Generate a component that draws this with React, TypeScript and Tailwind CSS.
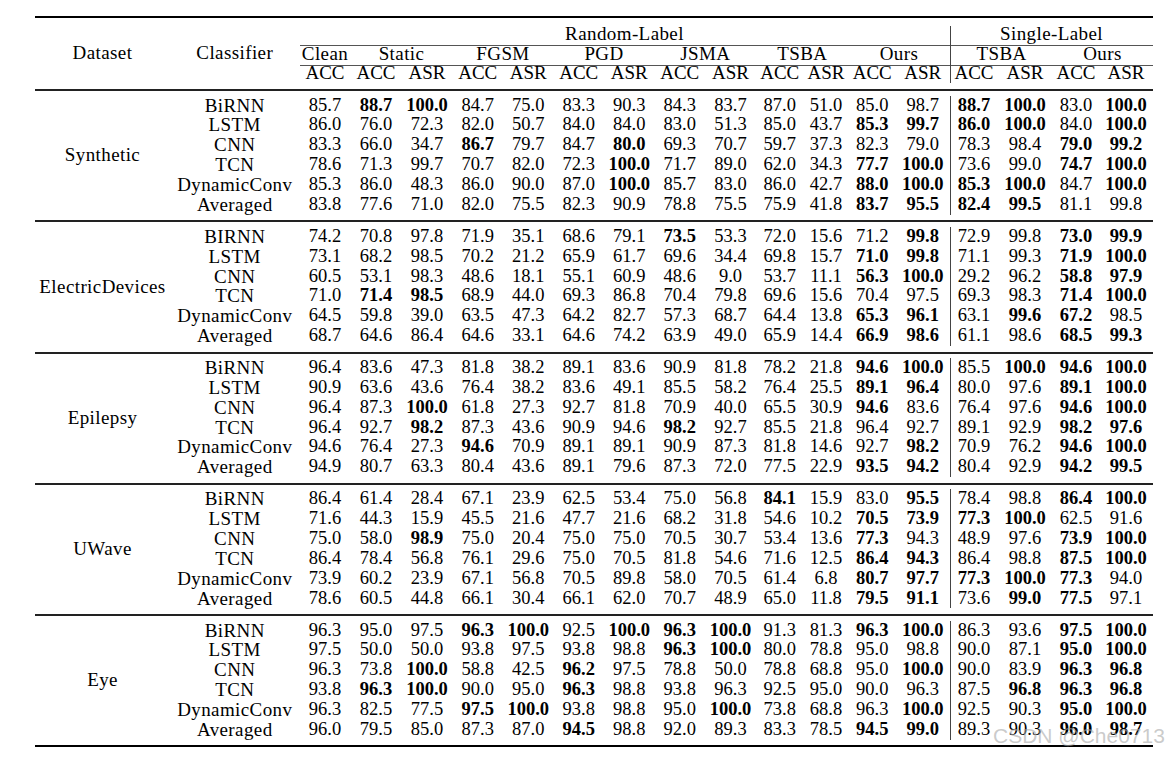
const serif = "font-['Liberation_Serif','Times_New_Roman',serif]";

// column widths: 13 Random-Label columns, then 4 Single-Label columns
const randW = [
  "w-[51px]", "w-[51px]", "w-[51px]", "w-[50.5px]", "w-[50.5px]", "w-[50.5px]", "w-[50.5px]",
  "w-[50.5px]", "w-[51px]", "w-[47.5px]", "w-[45px]", "w-[47.5px]", "w-[53.5px]",
];
const singleW = ["w-[47px]", "w-[55px]", "w-[47px]", "w-[53px]"];

const randGroups = [
  { name: "Clean", w: "w-[51px]", subs: ["ACC"] },
  { name: "Static", w: "w-[102px]", subs: ["ACC", "ASR"] },
  { name: "FGSM", w: "w-[101px]", subs: ["ACC", "ASR"] },
  { name: "PGD", w: "w-[101px]", subs: ["ACC", "ASR"] },
  { name: "JSMA", w: "w-[101.5px]", subs: ["ACC", "ASR"] },
  { name: "TSBA", w: "w-[92.5px]", subs: ["ACC", "ASR"] },
  { name: "Ours", w: "w-[101px]", subs: ["ACC", "ASR"] },
];
const singleGroups = [
  { name: "TSBA", w: "w-[102px]" },
  { name: "Ours", w: "w-[100px]" },
];

// "*" = bold
const sections: { name: string; rows: [string, string][] }[] = [
  {
    name: "Synthetic",
    rows: [
      ["BiRNN", "85.7 *88.7 *100.0 84.7 75.0 83.3 90.3 84.3 83.7 87.0 51.0 85.0 98.7 *88.7 *100.0 83.0 *100.0"],
      ["LSTM", "86.0 76.0 72.3 82.0 50.7 84.0 84.0 83.0 51.3 85.0 43.7 *85.3 *99.7 *86.0 *100.0 84.0 *100.0"],
      ["CNN", "83.3 66.0 34.7 *86.7 79.7 84.7 *80.0 69.3 70.7 59.7 37.3 82.3 79.0 78.3 98.4 *79.0 *99.2"],
      ["TCN", "78.6 71.3 99.7 70.7 82.0 72.3 *100.0 71.7 89.0 62.0 34.3 *77.7 *100.0 73.6 99.0 *74.7 *100.0"],
      ["DynamicConv", "85.3 86.0 48.3 86.0 90.0 87.0 *100.0 85.7 83.0 86.0 42.7 *88.0 *100.0 *85.3 *100.0 84.7 *100.0"],
      ["Averaged", "83.8 77.6 71.0 82.0 75.5 82.3 90.9 78.8 75.5 75.9 41.8 *83.7 *95.5 *82.4 *99.5 81.1 99.8"],
    ],
  },
  {
    name: "ElectricDevices",
    rows: [
      ["BIRNN", "74.2 70.8 97.8 71.9 35.1 68.6 79.1 *73.5 53.3 72.0 15.6 71.2 *99.8 72.9 99.8 *73.0 *99.9"],
      ["LSTM", "73.1 68.2 98.5 70.2 21.2 65.9 61.7 69.6 34.4 69.8 15.7 *71.0 *99.8 71.1 99.3 *71.9 *100.0"],
      ["CNN", "60.5 53.1 98.3 48.6 18.1 55.1 60.9 48.6 9.0 53.7 11.1 *56.3 *100.0 29.2 96.2 *58.8 *97.9"],
      ["TCN", "71.0 *71.4 *98.5 68.9 44.0 69.3 86.8 70.4 79.8 69.6 15.6 70.4 97.5 69.3 98.3 *71.4 *100.0"],
      ["DynamicConv", "64.5 59.8 39.0 63.5 47.3 64.2 82.7 57.3 68.7 64.4 13.8 *65.3 *96.1 63.1 *99.6 *67.2 98.5"],
      ["Averaged", "68.7 64.6 86.4 64.6 33.1 64.6 74.2 63.9 49.0 65.9 14.4 *66.9 *98.6 61.1 98.6 *68.5 *99.3"],
    ],
  },
  {
    name: "Epilepsy",
    rows: [
      ["BiRNN", "96.4 83.6 47.3 81.8 38.2 89.1 83.6 90.9 81.8 78.2 21.8 *94.6 *100.0 85.5 *100.0 *94.6 *100.0"],
      ["LSTM", "90.9 63.6 43.6 76.4 38.2 83.6 49.1 85.5 58.2 76.4 25.5 *89.1 *96.4 80.0 97.6 *89.1 *100.0"],
      ["CNN", "96.4 87.3 *100.0 61.8 27.3 92.7 81.8 70.9 40.0 65.5 30.9 *94.6 83.6 76.4 97.6 *94.6 *100.0"],
      ["TCN", "96.4 92.7 *98.2 87.3 43.6 90.9 94.6 *98.2 92.7 85.5 21.8 96.4 92.7 89.1 92.9 *98.2 *97.6"],
      ["DynamicConv", "94.6 76.4 27.3 *94.6 70.9 89.1 89.1 90.9 87.3 81.8 14.6 92.7 *98.2 70.9 76.2 *94.6 *100.0"],
      ["Averaged", "94.9 80.7 63.3 80.4 43.6 89.1 79.6 87.3 72.0 77.5 22.9 *93.5 *94.2 80.4 92.9 *94.2 *99.5"],
    ],
  },
  {
    name: "UWave",
    rows: [
      ["BiRNN", "86.4 61.4 28.4 67.1 23.9 62.5 53.4 75.0 56.8 *84.1 15.9 83.0 *95.5 78.4 98.8 *86.4 *100.0"],
      ["LSTM", "71.6 44.3 15.9 45.5 21.6 47.7 21.6 68.2 31.8 54.6 10.2 *70.5 *73.9 *77.3 *100.0 62.5 91.6"],
      ["CNN", "75.0 58.0 *98.9 75.0 20.4 75.0 75.0 70.5 30.7 53.4 13.6 *77.3 94.3 48.9 97.6 *73.9 *100.0"],
      ["TCN", "86.4 78.4 56.8 76.1 29.6 75.0 70.5 81.8 54.6 71.6 12.5 *86.4 *94.3 86.4 98.8 *87.5 *100.0"],
      ["DynamicConv", "73.9 60.2 23.9 67.1 56.8 70.5 89.8 58.0 70.5 61.4 6.8 *80.7 *97.7 *77.3 *100.0 *77.3 94.0"],
      ["Averaged", "78.6 60.5 44.8 66.1 30.4 66.1 62.0 70.7 48.9 65.0 11.8 *79.5 *91.1 73.6 *99.0 *77.5 97.1"],
    ],
  },
  {
    name: "Eye",
    rows: [
      ["BiRNN", "96.3 95.0 97.5 *96.3 *100.0 92.5 *100.0 *96.3 *100.0 91.3 81.3 *96.3 *100.0 86.3 93.6 *97.5 *100.0"],
      ["LSTM", "97.5 50.0 50.0 93.8 97.5 93.8 98.8 *96.3 *100.0 80.0 78.8 95.0 98.8 90.0 87.1 *95.0 *100.0"],
      ["CNN", "96.3 73.8 *100.0 58.8 42.5 *96.2 97.5 78.8 50.0 78.8 68.8 95.0 *100.0 90.0 83.9 *96.3 *96.8"],
      ["TCN", "93.8 *96.3 *100.0 90.0 95.0 *96.3 98.8 93.8 96.3 92.5 95.0 90.0 96.3 87.5 *96.8 *96.3 *96.8"],
      ["DynamicConv", "96.3 82.5 77.5 *97.5 *100.0 93.8 98.8 95.0 *100.0 73.8 68.8 96.3 *100.0 92.5 90.3 *95.0 *100.0"],
      ["Averaged", "96.0 79.5 85.0 87.3 87.0 *94.5 98.8 92.0 89.3 83.3 78.5 *94.5 *99.0 89.3 90.3 *96.0 *98.7"],
    ],
  },
];

const label = "text-[19px] tracking-[0.4px]";

function Num({ v, w }: { v: string; w: string }) {
  const bold = v.startsWith("*");
  return (
    <div className={`${w} shrink-0 text-center text-[18.5px] ${bold ? "font-bold" : ""}`}>
      {bold ? v.slice(1) : v}
    </div>
  );
}

function Header() {
  return (
    <div className="flex h-[71px]">
      <div className={`w-[135px] shrink-0 flex items-center justify-center ${label}`}>Dataset</div>
      <div className={`w-[129.5px] shrink-0 flex items-center justify-center ${label}`}>Classifier</div>
      {/* Random-Label */}
      <div className="w-[650px] shrink-0 flex flex-col">
        <div className={`h-[28px] border-b border-[#555] pt-[5.5px] text-center leading-[20px] ${label}`}>
          Random-Label
        </div>
        <div className="h-[20px] border-b border-[#555] flex">
          {randGroups.map((g) => (
            <div key={g.name} className={`${g.w} shrink-0 text-center leading-[20px] -mt-[2px] ${label}`}>
              {g.name}
            </div>
          ))}
        </div>
        <div className="h-[23px] flex">
          {randW.map((w, i) => (
            <div key={i} className={`${w} shrink-0 text-center leading-[20px] -mt-[3.5px] text-[19px]`}>
              {i === 0 || i % 2 === 1 ? "ACC" : "ASR"}
            </div>
          ))}
        </div>
      </div>
      {/* Single-Label, bar shorter than the header */}
      <div className="flex flex-col border-l border-[#444] mt-[8px] mb-[6px]">
        <div className="flex flex-col -mt-[8px] -mb-[6px]">
          <div className={`h-[28px] border-b border-[#555] pt-[5.5px] text-center leading-[20px] ${label}`}>
            Single-Label
          </div>
          <div className="h-[20px] border-b border-[#555] flex">
            {singleGroups.map((g) => (
              <div key={g.name} className={`${g.w} shrink-0 text-center leading-[20px] -mt-[2px] ${label}`}>
                {g.name}
              </div>
            ))}
          </div>
          <div className="h-[23px] flex">
            {singleW.map((w, i) => (
              <div key={i} className={`${w} shrink-0 text-center leading-[20px] -mt-[3.5px] text-[19px]`}>
                {i % 2 === 0 ? "ACC" : "ASR"}
              </div>
            ))}
          </div>
        </div>
      </div>
    </div>
  );
}

function Section({ name, rows }: { name: string; rows: [string, string][] }) {
  return (
    <>
      <div className="h-[2px] bg-[#222]" />
      <div className="flex">
        <div className={`w-[135px] shrink-0 flex items-center justify-center ${label}`}>{name}</div>
        <div className="flex flex-col pt-[4.6px] pb-[5.6px]">
          {rows.map(([cls, line]) => {
            const vals = line.split(" ");
            return (
              <div key={cls} className="flex h-[19.85px] items-center leading-[19.85px]">
                <div className={`w-[129.5px] shrink-0 text-center ${label}`}>{cls}</div>
                <div className="flex">
                  {randW.map((w, i) => (
                    <Num key={i} v={vals[i]} w={w} />
                  ))}
                </div>
                <div className="flex h-full items-center border-l border-[#444]">
                  {singleW.map((w, i) => (
                    <Num key={i} v={vals[13 + i]} w={w} />
                  ))}
                </div>
              </div>
            );
          })}
        </div>
      </div>
    </>
  );
}

export default function App() {
  return (
    <div className={`relative w-[1171px] h-[758px] bg-white text-black overflow-hidden ${serif}`}>
      <div className="ml-[35px] w-[1117.5px] pt-[16px]">
        <div className="h-[2px] bg-black" />
        <Header />
        {sections.map((s) => (
          <Section key={s.name} name={s.name} rows={s.rows} />
        ))}
        <div className="h-[2px] bg-black" />
      </div>
      {/* watermark */}
      <div className="absolute left-[993px] top-[724px] text-[21px] leading-[24px] text-[#a8a8a8]/60 font-['Liberation_Sans',Arial,sans-serif] whitespace-nowrap">
        CSDN @Che0713
      </div>
    </div>
  );
}
